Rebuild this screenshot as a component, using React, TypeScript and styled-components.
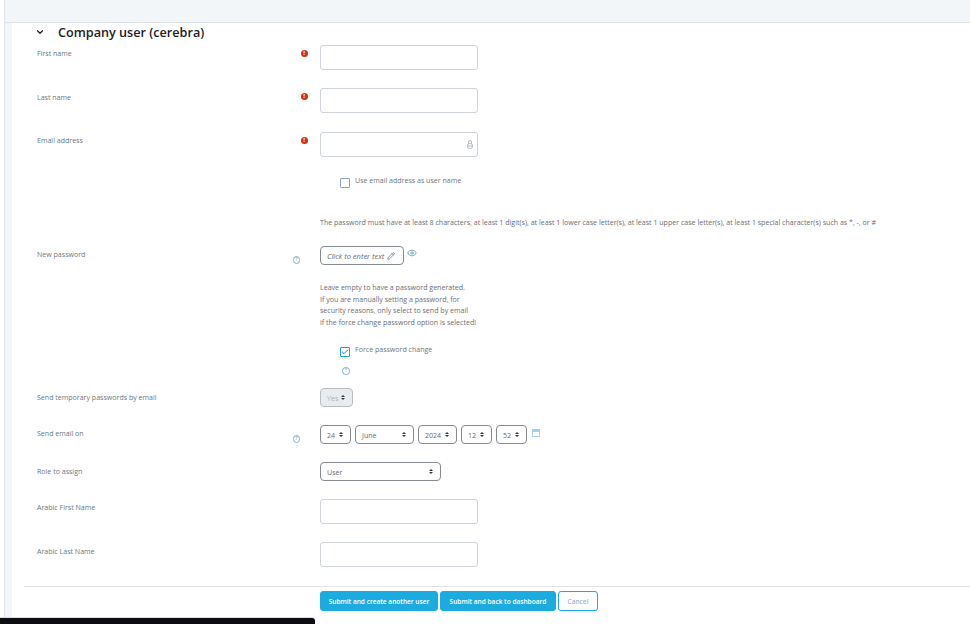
import styled, { createGlobalStyle } from "styled-components";
import { ChevronDown, Pencil, Eye, Check } from "lucide-react";

const GlobalStyle = createGlobalStyle`
  html, body {
    margin: 0;
    padding: 0;
    background: #fff;
  }
  body {
    font-family: "Open Sans", "Liberation Sans", sans-serif;
    overflow: hidden;
  }
`;

const Page = styled.div`
  position: relative;
  width: 970px;
  height: 624px;
  overflow: hidden;
  background: #fff;
  padding-left: 4px;
  box-sizing: border-box;
`;

const Frame = styled.div`
  border-left: 1px solid #e1e5ea;
  height: 624px;
  box-sizing: border-box;
`;

const TopBar = styled.div`
  height: 22px;
  background: #f3f6f9;
  border-bottom: 1px solid #dee2e6;
`;

const Shell = styled.div`
  border-left: 7px solid #f3f6f9;
  height: 601px;
  box-sizing: border-box;
  padding-left: 12px;
`;

const SectionHead = styled.div`
  display: flex;
  align-items: center;
  height: 22px;
  box-sizing: border-box;
  padding: 0 0 4px 11px;
  color: #1d2125;
  font-size: 12.65px;
  font-weight: 600;
  gap: 13px;
`;

const Row = styled.div<{ $h: number }>`
  display: flex;
  height: ${({ $h }) => $h}px;
`;

const LabelCol = styled.div<{ $drop?: number }>`
  width: 264px;
  padding: ${({ $drop }) => 3 + ($drop ?? 0)}px 0 0 13px;
  box-sizing: border-box;
  font-size: 7.05px;
  color: #6b787c;
  line-height: 11px;
  flex: none;
`;

const MarkCol = styled.div`
  width: 32px;
  flex: none;
`;

const Field = styled.div`
  flex: 1;
`;

const Required = styled.span`
  display: block;
  width: 7px;
  height: 7px;
  border-radius: 50%;
  background: #ca3120;
  color: #fff;
  font-size: 6px;
  line-height: 7px;
  font-weight: 700;
  text-align: center;
  margin: 5px 0 0 12.5px;
`;

const Help = styled.span`
  display: block;
  width: 5.5px;
  height: 5.5px;
  border-radius: 50%;
  border: 1px solid #7fb0c4;
  color: #5b93a8;
  font-size: 5px;
  line-height: 5.5px;
  text-align: center;
`;

const HelpMark = styled(Help)`
  margin: 10px 0 0 4.5px;
`;

const HelpBelow = styled(Help)`
  margin: 4px 0 0 22px;
`;

const TextBox = styled.div`
  position: relative;
  width: 158px;
  height: 25px;
  box-sizing: border-box;
  border: 1px solid #ced4da;
  border-radius: 3px;
  background: #fff;
`;

const LockGlyph = styled.svg`
  position: absolute;
  right: 4px;
  top: 7px;
`;

const CheckLine = styled.div`
  display: flex;
  align-items: flex-start;
  gap: 5px;
  padding-left: 20px;
  font-size: 7.05px;
  line-height: 11px;
  color: #6b787c;
`;

const Box = styled.span<{ $on?: boolean }>`
  width: 8px;
  height: 8px;
  box-sizing: content-box;
  border: 1px solid ${({ $on }) => ($on ? "#1ba8dc" : "#8ba3c7")};
  border-radius: 1px;
  margin-top: 3px;
  display: flex;
  align-items: center;
  justify-content: center;
  color: #1f7e9a;
`;

const Note = styled.div`
  font-size: 7.07px;
  line-height: 11.5px;
  color: #6b6e74;
  white-space: nowrap;
`;

const RuleNote = styled(Note)`
  padding-top: 1px;
`;

const HintNote = styled(Note)`
  margin-top: 17px;
`;

const InplaceRow = styled.div`
  display: flex;
  align-items: flex-start;
  gap: 3px;
`;

const Inplace = styled.div`
  width: 84px;
  height: 19px;
  box-sizing: border-box;
  border: 1px solid #858b91;
  border-radius: 4px;
  display: flex;
  align-items: center;
  gap: 3px;
  padding-left: 6px;
  font-size: 7.5px;
  font-style: italic;
  color: #656c73;
`;

const EyeIcon = styled(Eye)`
  color: #5fa3c4;
  margin-top: 2px;
`;

const Selects = styled.div`
  display: flex;
  align-items: flex-start;
  gap: 4px;
`;

const Select = styled.div<{ $w: number; $disabled?: boolean }>`
  width: ${({ $w }) => $w}px;
  height: 19px;
  box-sizing: border-box;
  border: 1px solid ${({ $disabled }) => ($disabled ? "#b9bec4" : "#858b91")};
  border-radius: 4px;
  background: ${({ $disabled }) => ($disabled ? "#e9ecef" : "#fff")};
  color: ${({ $disabled }) => ($disabled ? "#aab0b5" : "#656c73")};
  display: flex;
  align-items: center;
  justify-content: space-between;
  padding: 0 7px 0 6px;
  font-size: 7.05px;
`;

const Updown = styled.span`
  display: inline-flex;
  flex-direction: column;
  gap: 1px;
  &::before,
  &::after {
    content: "";
    display: block;
    border-left: 2px solid transparent;
    border-right: 2px solid transparent;
  }
  &::before {
    border-bottom: 2.5px solid #343a40;
  }
  &::after {
    border-top: 2.5px solid #343a40;
  }
`;

const CalendarGlyph = styled.svg`
  margin: 4px 0 0 1px;
`;

const Footer = styled.div`
  border-top: 1px solid #e0e2e5;
  padding: 4px 0 0 296px;
  display: flex;
  gap: 2px;
`;

const Btn = styled.div<{ $w: number; $ghost?: boolean }>`
  width: ${({ $w }) => $w}px;
  height: 20px;
  box-sizing: border-box;
  border-radius: 3px;
  display: flex;
  align-items: center;
  justify-content: center;
  font-size: 6.55px;
  font-weight: 600;
  white-space: nowrap;
  background: ${({ $ghost }) => ($ghost ? "#fff" : "#1cabdf")};
  color: ${({ $ghost }) => ($ghost ? "#a3b4cf" : "#fff")};
  border: 1px solid #1cabdf;
`;

const BlackBar = styled.div`
  position: absolute;
  left: 0;
  bottom: 0;
  width: 315px;
  height: 6px;
  background: #0c0d10;
  border-top-right-radius: 3px;
  box-shadow: 0 -1px 0 #dcdde0;
`;

export default function App() {
  return (
    <Page>
      <GlobalStyle />
      <Frame>
        <TopBar />
        <Shell>
          <SectionHead>
            <ChevronDown size={10} strokeWidth={3} />
            Company user (cerebra)
          </SectionHead>
          <Row $h={43}>
            <LabelCol>First name</LabelCol>
            <MarkCol><Required>!</Required></MarkCol>
            <Field><TextBox /></Field>
          </Row>
          <Row $h={44}>
            <LabelCol $drop={1}>Last name</LabelCol>
            <MarkCol><Required>!</Required></MarkCol>
            <Field><TextBox /></Field>
          </Row>
          <Row $h={43}>
            <LabelCol>Email address</LabelCol>
            <MarkCol><Required>!</Required></MarkCol>
            <Field>
              <TextBox>
                <LockGlyph width="6" height="9" viewBox="0 0 6 9" fill="none" stroke="#a3aab0" strokeWidth="0.8">
                  <rect x="0.5" y="3.5" width="5" height="5" rx="2" />
                  <path d="M1.5 3.5V2a1.5 1.5 0 0 1 3 0v1.5M0.5 6h5" />
                </LockGlyph>
              </TextBox>
            </Field>
          </Row>
          <Row $h={41}>
            <LabelCol />
            <MarkCol />
            <Field>
              <CheckLine>
                <Box />
                Use email address as user name
              </CheckLine>
            </Field>
          </Row>
          <Row $h={30}>
            <LabelCol />
            <MarkCol />
            <Field><RuleNote>The password must have at least 8 characters, at least 1 digit(s), at least 1 lower case letter(s), at least 1 upper case letter(s), at least 1 special character(s) such as *, -, or #</RuleNote></Field>
          </Row>
          <Row $h={98}>
            <LabelCol>New password</LabelCol>
            <MarkCol><HelpMark>?</HelpMark></MarkCol>
            <Field>
              <InplaceRow>
                <Inplace>Click to enter text <Pencil size={8} /></Inplace>
                <EyeIcon size={10} />
              </InplaceRow>
              <HintNote>
                Leave empty to have a password generated.<br />
                If you are manually setting a password, for<br />
                security reasons, only select to send by email<br />
                if the force change password option is selected!
              </HintNote>
            </Field>
          </Row>
          <Row $h={19}>
            <LabelCol />
            <MarkCol />
            <Field>
              <CheckLine>
                <Box $on><Check size={8} strokeWidth={3} /></Box>
                Force password change
              </CheckLine>
            </Field>
          </Row>
          <Row $h={25}>
            <LabelCol />
            <MarkCol />
            <Field><HelpBelow>?</HelpBelow></Field>
          </Row>
          <Row $h={37}>
            <LabelCol $drop={1}>Send temporary passwords by email</LabelCol>
            <MarkCol />
            <Field><Selects><Select $w={33} $disabled>Yes <Updown /></Select></Selects></Field>
          </Row>
          <Row $h={37}>
            <LabelCol>Send email on</LabelCol>
            <MarkCol><HelpMark>?</HelpMark></MarkCol>
            <Field>
              <Selects>
                <Select $w={31}>24 <Updown /></Select>
                <Select $w={59}>June <Updown /></Select>
                <Select $w={39}>2024 <Updown /></Select>
                <Select $w={31}>12 <Updown /></Select>
                <Select $w={31}>52 <Updown /></Select>
                <CalendarGlyph width="8" height="8" viewBox="0 0 8 8">
                  <rect x="0.5" y="0.5" width="7" height="7" fill="#fff" stroke="#a9cfe6" />
                  <rect x="0.5" y="0.5" width="7" height="2.5" fill="#a9cfe6" />
                </CalendarGlyph>
              </Selects>
            </Field>
          </Row>
          <Row $h={37}>
            <LabelCol $drop={1}>Role to assign</LabelCol>
            <MarkCol />
            <Field><Selects><Select $w={121}>User <Updown /></Select></Selects></Field>
          </Row>
          <Row $h={43}>
            <LabelCol>Arabic First Name</LabelCol>
            <MarkCol />
            <Field><TextBox /></Field>
          </Row>
          <Row $h={44}>
            <LabelCol $drop={1}>Arabic Last Name</LabelCol>
            <MarkCol />
            <Field><TextBox /></Field>
          </Row>
          <Footer>
            <Btn $w={118}>Submit and create another user</Btn>
            <Btn $w={116}>Submit and back to dashboard</Btn>
            <Btn $w={40} $ghost>Cancel</Btn>
          </Footer>
        </Shell>
      </Frame>
      <BlackBar />
    </Page>
  );
}
